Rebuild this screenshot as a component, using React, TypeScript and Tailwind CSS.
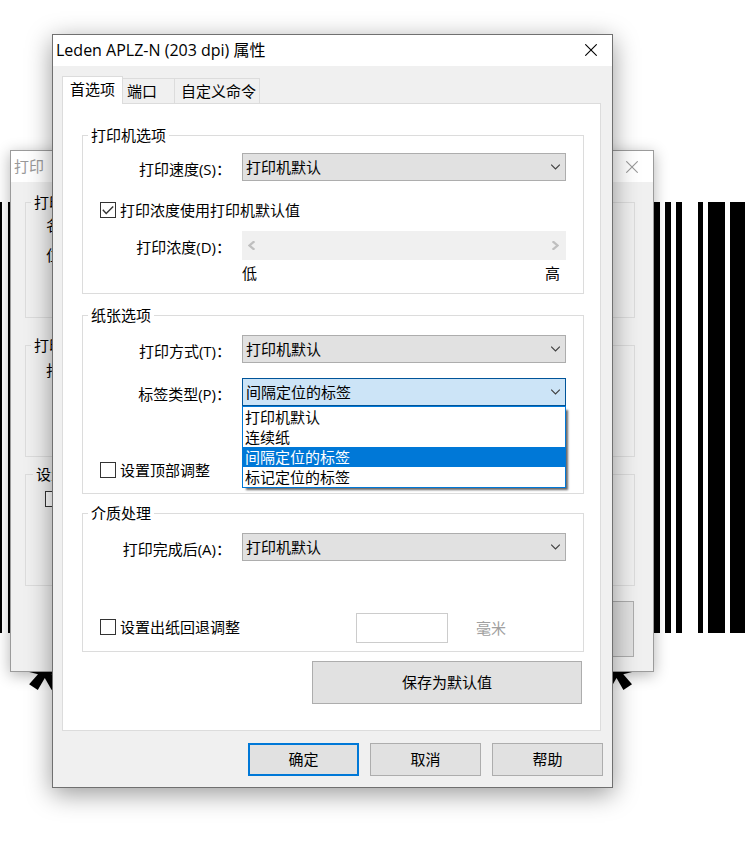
import React, { useState } from 'react';

interface GroupProps {
  title: string;
  className?: string;
  children?: React.ReactNode;
}

interface ComboBoxProps {
  id: string;
  options: string[];
}

const PRINTER_DEFAULT = '打印机默认';
const LABEL_TYPES = [PRINTER_DEFAULT, '连续纸', '间隔定位的标签', '标记定位的标签'];

function CloseIcon() {
  return (
    <svg className="w-3 h-3" viewBox="0 0 12 12" fill="none" stroke="currentColor" strokeWidth="1.1">
      <path d="M0.3 0.3 11.7 11.7M11.7 0.3 0.3 11.7" />
    </svg>
  );
}

function ComboArrow() {
  return (
    <svg
      className="pointer-events-none absolute right-1.5 top-[11px] w-[9px] h-[6px] text-[#404040]"
      viewBox="0 0 9 6"
      fill="none"
      stroke="currentColor"
      strokeWidth="1.1"
    >
      <path d="M0.2 0.6 4.5 4.9 8.8 0.6" />
    </svg>
  );
}

function Group({ title, className = '', children }: GroupProps) {
  return (
    <fieldset className={`min-w-0 border border-[#dcdcdc] ${className}`}>
      <legend className="ml-[5px] px-[3px] leading-[21px]">{title}</legend>
      {children}
    </fieldset>
  );
}

function Field({ id, label, children }: { id: string; label: string; children: React.ReactNode }) {
  return (
    <div className="flex items-start">
      <label htmlFor={id} className="w-[159px] shrink-0 pr-[11px] pt-[5px] text-right leading-[22px]">
        {label}
      </label>
      <div className="relative min-w-0 flex-1">{children}</div>
    </div>
  );
}

function ComboBox({ id, options }: ComboBoxProps) {
  return (
    <>
      <select
        id={id}
        className="block w-full h-7 appearance-none border border-[#adadad] bg-[#e1e1e1] px-[3px] outline-none"
      >
        {options.map((option) => (
          <option key={option}>{option}</option>
        ))}
      </select>
      <ComboArrow />
    </>
  );
}

// Combo box whose list is already dropped down
function LabelTypeCombo() {
  const [value, setValue] = useState('间隔定位的标签');
  const [isOpen, setIsOpen] = useState(true);

  return (
    <>
      <select
        id="label-type"
        value={value}
        onChange={(e) => setValue(e.target.value)}
        onMouseDown={(e) => {
          e.preventDefault();
          setIsOpen(!isOpen);
        }}
        className="block w-full h-7 appearance-none border border-[#005499] bg-[#cce4f7] px-[3px] outline-none"
      >
        {LABEL_TYPES.map((type) => (
          <option key={type}>{type}</option>
        ))}
      </select>
      <ComboArrow />

      {isOpen && (
        <ul
          role="listbox"
          aria-label="标签类型"
          className="absolute inset-x-0 top-full z-10 border border-[#0078d7] bg-white shadow-[3px_3px_2px_-1px_rgba(0,0,0,0.6)]"
        >
          {LABEL_TYPES.map((type) => (
            <li
              key={type}
              role="option"
              aria-selected={type === value}
              onClick={() => {
                setValue(type);
                setIsOpen(false);
              }}
              className={`h-5 px-0.5 leading-5 ${type === value ? 'bg-[#0078d7] text-white' : ''}`}
            >
              {type}
            </li>
          ))}
        </ul>
      )}
    </>
  );
}

function CheckField({ label, defaultChecked = false }: { label: string; defaultChecked?: boolean }) {
  return (
    <label className="flex items-center gap-1 pl-[17px] leading-[22px]">
      <span className="grid w-4 h-4">
        <input
          type="checkbox"
          defaultChecked={defaultChecked}
          className="peer col-start-1 row-start-1 w-4 h-4 appearance-none border border-[#333333] bg-white"
        />
        <svg
          className="pointer-events-none invisible col-start-1 row-start-1 w-4 h-4 peer-checked:visible"
          viewBox="0 0 16 16"
          fill="none"
          stroke="#333333"
          strokeWidth="1.4"
        >
          <path d="M2.8 7.8 6.2 11.4 13.2 4.4" />
        </svg>
      </span>
      {label}
    </label>
  );
}

function DensitySlider() {
  return (
    <>
      <input
        id="density"
        type="range"
        disabled
        className="block w-full h-[29px] appearance-none bg-[#f0f0f0] [&::-webkit-slider-thumb]:appearance-none [&::-webkit-slider-thumb]:w-0"
      />
      <svg
        className="pointer-events-none absolute left-1.5 top-[10px] w-[7px] h-[9px]"
        viewBox="0 0 7 9"
        fill="none"
        stroke="#bfbfbf"
        strokeWidth="2.2"
      >
        <path d="M6.4 0.2 1.5 4.5 6.4 8.8" />
      </svg>
      <svg
        className="pointer-events-none absolute right-[7px] top-[10px] w-[7px] h-[9px]"
        viewBox="0 0 7 9"
        fill="none"
        stroke="#bfbfbf"
        strokeWidth="2.2"
      >
        <path d="M0.6 0.2 5.5 4.5 0.6 8.8" />
      </svg>
      <div className="flex justify-between pt-0.5 pr-1.5 leading-[22px]">
        <span>低</span>
        <span>高</span>
      </div>
    </>
  );
}

// Barcode label on the canvas behind the windows
function BarcodeLabel() {
  return (
    <div className="absolute inset-x-0 top-[202px]">
      <svg className="block w-full h-[431px]" viewBox="0 0 745 431" preserveAspectRatio="none" fill="#000000">
        <rect x="0" width="2" height="431" />
        <rect x="8" width="6" height="431" />
        <rect x="648" width="12" height="431" />
        <rect x="665" width="6" height="431" />
        <rect x="676" width="6" height="431" />
        <rect x="698" width="5" height="431" />
        <rect x="708" width="17" height="431" />
        <rect x="730" width="15" height="431" />
      </svg>
      <div className="flex justify-between pl-[26px] pr-[110px] pt-[6px] font-['Liberation_Sans',sans-serif] text-[96px] font-bold leading-[96px]">
        <span>*</span>
        <span>*</span>
      </div>
    </div>
  );
}

function PrintWindow() {
  return (
    <section className="absolute left-[10px] right-[91px] top-[150px] border border-[#9b9b9b] bg-[#f0f0f0] shadow-[0_3px_14px_rgba(0,0,0,0.3)]">
      <header className="flex h-[31px] items-center justify-between bg-white pl-[3px] pr-[15px] text-[#999999]">
        <h2 className="pb-0.5">打印</h2>
        <button aria-label="关闭">
          <CloseIcon />
        </button>
      </header>
      <div className="flex flex-col pl-[14px] pr-[18px] pt-[10px] pb-[14px]">
        <Group title="打印机" className="h-[126px]">
          <p className="pl-5 leading-6">名称</p>
          <p className="pl-5 pt-1.5 leading-6">位置</p>
        </Group>
        <Group title="打印范围" className="mt-[17px] h-[122px]">
          <p className="pl-5 pt-0.5 leading-6">打印</p>
        </Group>
        <Group title="设置" className="mt-[7px] h-[122px] pl-0.5 pt-1.5">
          <CheckField label="" />
        </Group>
        <button className="mt-[15px] mr-px h-14 w-[111px] self-end border border-[#adadad] bg-[#e1e1e1]" aria-label="取消" />
      </div>
    </section>
  );
}

function PropertiesDialog() {
  return (
    <section className="relative ml-[52px] mr-[132px] border border-[#707070] bg-[#f0f0f0] shadow-[0_6px_24px_rgba(0,0,0,0.4)]">
      <header className="flex h-[31px] items-center justify-between bg-white pl-[3px] pr-[15px]">
        <h1 className="pb-0.5 text-base leading-[22px]">Leden APLZ-N (203 dpi) 属性</h1>
        <button aria-label="关闭" className="pb-px">
          <CloseIcon />
        </button>
      </header>

      <div className="pl-[9px] pr-[11px] pt-[10px]">
        {/* Tabs */}
        <div role="tablist" className="flex items-end">
          <button role="tab" aria-selected="true" className="z-10 -mb-px h-7 w-[61px] border border-b-0 border-[#dcdcdc] bg-white pb-1">
            首选项
          </button>
          <button role="tab" aria-selected="false" className="h-[25px] w-[52px] border-t border-r border-[#dcdcdc] pl-1 text-left">
            端口
          </button>
          <button role="tab" aria-selected="false" className="h-[25px] w-[85px] border-t border-r border-[#dcdcdc] pl-[3px]">
            自定义命令
          </button>
        </div>

        {/* Preferences */}
        <div role="tabpanel" className="flex flex-col border border-[#dcdcdc] bg-white pl-[19px] pr-4 pt-[21px] pb-[26px]">
          <Group title="打印机选项" className="pt-[7px] pr-[17px] pb-[9px]">
            <Field id="speed" label="打印速度(S)：">
              <ComboBox id="speed" options={[PRINTER_DEFAULT]} />
            </Field>
            <div className="pt-[18px] pb-[10px]">
              <CheckField label="打印浓度使用打印机默认值" defaultChecked />
            </div>
            <Field id="density" label="打印浓度(D)：">
              <DensitySlider />
            </Field>
          </Group>

          <Group title="纸张选项" className="mt-[11px] pt-[9px] pr-[17px] pb-3">
            <Field id="method" label="打印方式(T)：">
              <ComboBox id="method" options={[PRINTER_DEFAULT]} />
            </Field>
            <div className="pt-[15px] pb-[53px]">
              <Field id="label-type" label="标签类型(P)：">
                <LabelTypeCombo />
              </Field>
            </div>
            <CheckField label="设置顶部调整" />
          </Group>

          <Group title="介质处理" className="mt-[9px] pt-[9px] pr-[17px] pb-2">
            <Field id="after-print" label="打印完成后(A)：">
              <ComboBox id="after-print" options={[PRINTER_DEFAULT]} />
            </Field>
            <div className="flex items-center pt-[52px]">
              <div className="w-[273px] pb-0.5">
                <CheckField label="设置出纸回退调整" />
              </div>
              <input
                type="text"
                disabled
                aria-label="回退距离"
                className="h-[30px] w-[92px] border border-[#cccccc] bg-white px-1"
              />
              <span className="pl-7 text-[#a0a0a0]">毫米</span>
            </div>
          </Group>

          <button className="mt-[9px] mr-0.5 h-[43px] w-[270px] self-end border border-[#adadad] bg-[#e1e1e1] pb-0.5">
            保存为默认值
          </button>
        </div>
      </div>

      <footer className="flex justify-end gap-[11px] pt-3 pr-[9px] pb-[11px]">
        <button className="h-[33px] w-[111px] border-2 border-[#0078d7] bg-[#e1e1e1] pb-0.5">确定</button>
        <button className="h-[33px] w-[111px] border border-[#adadad] bg-[#e1e1e1] pb-0.5">取消</button>
        <button className="h-[33px] w-[111px] border border-[#adadad] bg-[#e1e1e1] pb-0.5">帮助</button>
      </footer>
    </section>
  );
}

export default function App() {
  return (
    <main className="relative min-h-screen overflow-hidden bg-white pt-[34px] pb-16 font-['Open_Sans','Noto_Sans_CJK_SC',sans-serif] text-[15px] leading-[22px] text-black">
      <BarcodeLabel />
      <PrintWindow />
      <PropertiesDialog />
    </main>
  );
}
